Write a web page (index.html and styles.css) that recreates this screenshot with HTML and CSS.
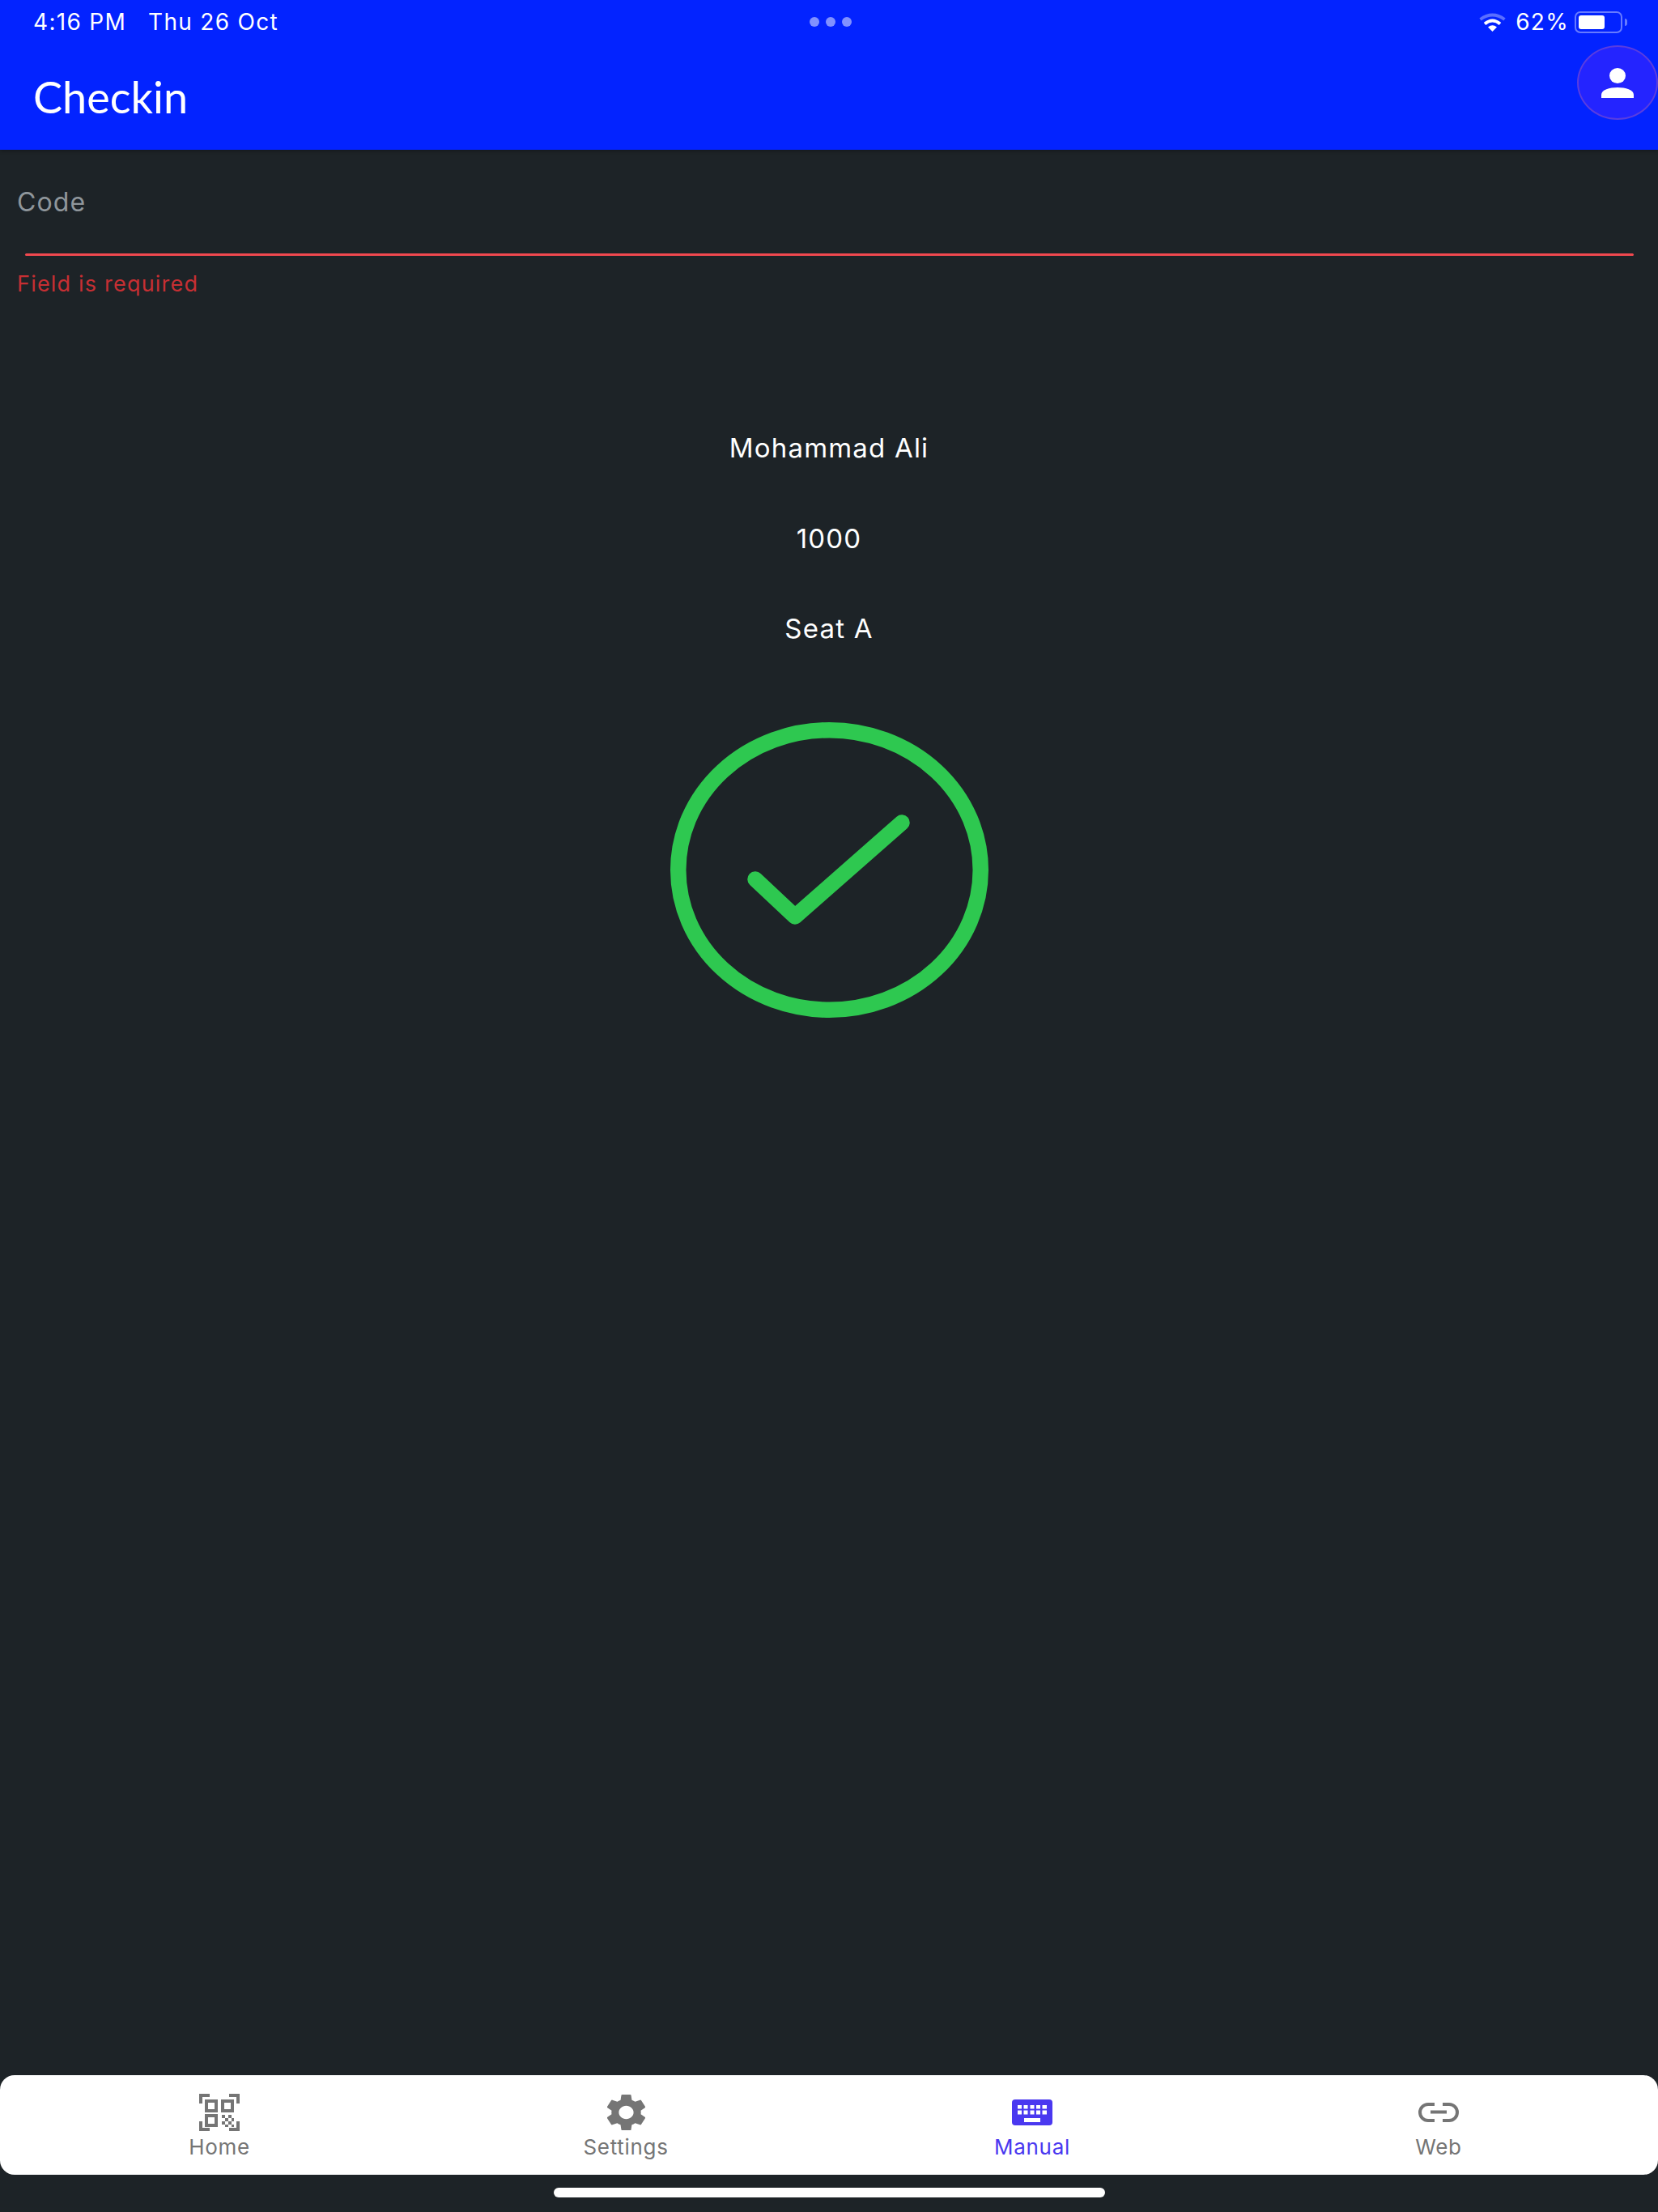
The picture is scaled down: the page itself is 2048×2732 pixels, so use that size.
FILE: index.html
```html
<!DOCTYPE html>
<html lang="en">
<head>
<meta charset="utf-8">
<title>Checkin</title>
<link rel="stylesheet" href="styles.css">
</head>
<body>
<div class="app">
  <header class="appbar">
    <div class="status">
      <div class="status-left"><span>4:16 PM</span><span>Thu 26 Oct</span></div>
      <div class="dots"><i></i><i></i><i></i></div>
      <div class="status-right">
        <svg class="wifi" viewBox="0 0 35 23" width="35" height="23"><path d="M2.5 8 Q17.5 -3 32.5 8" fill="none" stroke="#fff" stroke-opacity=".35" stroke-width="4"/><path d="M8 13.5 Q17.5 5.5 27 13.5" fill="none" stroke="#fff" stroke-width="4"/><path d="M12 17.5 Q17.5 13 23 17.5 L17.5 23 Z" fill="#fff"/></svg>
        <span class="pct">62%</span>
        <div class="battery"><div class="battery-body"><div class="battery-fill"></div></div><div class="battery-nub"></div></div>
      </div>
    </div>
    <div class="toolbar">
      <h1 class="title">Checkin</h1>
      <div class="avatar">
        <svg viewBox="0 0 40 37" width="40" height="37"><ellipse cx="20" cy="9.5" rx="10" ry="9.5" fill="#fff"/><path d="M0 37 V33 C0 27 10 24 20 24 S40 27 40 33 V37 Z" fill="#fff"/></svg>
      </div>
    </div>
  </header>

  <main class="content">
    <section class="field">
      <div class="field-label">Code</div>
      <div class="field-line"></div>
      <div class="field-error">Field is required</div>
    </section>
    <section class="result">
      <div class="result-line">Mohammad Ali</div>
      <div class="result-line">1000</div>
      <div class="result-line">Seat A</div>
      <svg class="check" viewBox="0 0 393 365" width="393" height="365">
        <ellipse cx="196.5" cy="182.5" rx="186.75" ry="172.75" fill="none" stroke="#2ec850" stroke-width="19.5"/>
        <path d="M105 194 L154 240 L286 124" fill="none" stroke="#2ec850" stroke-width="19.5" stroke-linecap="round" stroke-linejoin="round"/>
      </svg>
    </section>
  </main>

  <nav class="tabbar">
    <div class="tab">
      <div class="tab-icon">
        <svg viewBox="0 0 50 46" width="50" height="46" fill="#757575">
          <path d="M0 0H13V4H4V12H0Z"/><path d="M50 0H37V4H46V12H50Z"/><path d="M0 46H13V42H4V34H0Z"/><path d="M50 46H37V42H46V34H50Z"/>
          <path fill-rule="evenodd" d="M7 7H23V23H7ZM11 11V19H19V11Z"/>
          <path fill-rule="evenodd" d="M27 7H43V23H27ZM31 11V19H39V11Z"/>
          <path fill-rule="evenodd" d="M7 25H23V41H7ZM11 29V37H19V29Z"/>
          <path d="M28 26h4v4h-4zM36 26h4v4h-4zM32 30h4v4h-4zM40 30h3v4h-3zM28 34h4v4h-4zM36 34h4v4h-4zM32 38h4v3h-4zM40 38h3v3h-3z"/>
        </svg>
      </div>
      <div class="tab-label">Home</div>
    </div>
    <div class="tab">
      <div class="tab-icon">
        <svg viewBox="2.7 2 18.6 20" width="47" height="46" preserveAspectRatio="none" fill="#757575"><path d="M19.14 12.94c.04-.3.06-.61.06-.94 0-.32-.02-.64-.07-.94l2.03-1.58c.18-.14.23-.41.12-.61l-1.92-3.32c-.12-.22-.37-.29-.59-.22l-2.39.96c-.5-.38-1.03-.7-1.62-.94l-.36-2.54c-.04-.24-.24-.41-.48-.41h-3.84c-.24 0-.43.17-.47.41l-.36 2.54c-.59.24-1.13.57-1.62.94l-2.39-.96c-.22-.08-.47 0-.59.22L2.74 8.87c-.12.21-.08.47.12.61l2.03 1.58c-.05.3-.09.63-.09.94s.02.64.07.94l-2.03 1.58c-.18.14-.23.41-.12.61l1.92 3.32c.12.22.37.29.59.22l2.39-.96c.5.38 1.03.7 1.62.94l.36 2.54c.05.24.24.41.48.41h3.84c.24 0 .44-.17.47-.41l.36-2.54c.59-.24 1.13-.56 1.62-.94l2.39.96c.22.08.47 0 .59-.22l1.92-3.32c.12-.22.07-.47-.12-.61l-2.01-1.58zM12 15.6c-1.98 0-3.6-1.62-3.6-3.6s1.62-3.6 3.6-3.6 3.6 1.62 3.6 3.6-1.62 3.6-3.6 3.6z"/></svg>
      </div>
      <div class="tab-label">Settings</div>
    </div>
    <div class="tab tab-active">
      <div class="tab-icon">
        <svg viewBox="0 0 50 32" width="50" height="32">
          <rect width="50" height="32" rx="4" fill="#4a38f0"/>
          <path fill="#fff" d="M7 7h5v4.500H7zM14.500 7h5v4.500h-5zM22.500 7h5v4.500h-5zM30 7h5v4.500h-5zM37.500 7h5.500v4.500h-5.500zM7 13.500h5v5H7zM14.500 13.500h5v5h-5zM22.500 13.500h5v5h-5zM30 13.500h5v5h-5zM37.500 13.500h5.500v5h-5.500zM15 23h20v5H15z"/>
        </svg>
      </div>
      <div class="tab-label">Manual</div>
    </div>
    <div class="tab">
      <div class="tab-icon">
        <svg viewBox="0 0 50 24" width="50" height="24" fill="none" stroke="#757575" stroke-width="4">
          <path d="M20 2H12A10 10 0 0 0 12 22H20"/>
          <path d="M30 2H38A10 10 0 0 1 38 22H30"/>
          <path d="M15 11.500H35"/>
        </svg>
      </div>
      <div class="tab-label">Web</div>
    </div>
  </nav>
  <div class="home-bar"><div class="home-indicator"></div></div>
</div>
</body>
</html>
```

FILE: styles.css
```css
* { box-sizing: border-box; }
html, body { margin: 0; padding: 0; }
body { background: #1d2327; font-family: "Inter", "Liberation Sans", sans-serif; }

.app { display: flex; flex-direction: column; width: 2048px; height: 2732px; background: #1d2327; }

.appbar { height: 185px; background: #0323ff; color: #fff; box-shadow: 0 2px 4px rgba(0,0,0,.25); }

.status { height: 56px; padding: 0 38px 0 41px; display: grid; grid-template-columns: 1fr auto 1fr; align-items: start; }
.status-left { display: flex; gap: 27px; font-family: "Inter", sans-serif; font-size: 28px; letter-spacing: 1.3px; line-height: 54px; }
.dots { display: flex; gap: 8px; padding-top: 21px; }
.dots i { display: block; width: 12px; height: 12px; border-radius: 50%; background: rgba(255,255,255,.5); }
.status-right { display: flex; justify-content: flex-end; align-items: flex-start; }
.wifi { margin-top: 16px; margin-right: 11px; }
.pct { font-size: 28px; letter-spacing: 1.3px; line-height: 54px; margin-right: 7px; }
.battery { display: flex; align-items: center; margin-top: 14px; }
.battery-body { width: 59px; height: 27px; border: 2px solid rgba(255,255,255,.4); border-radius: 7px; padding: 3px; }
.battery-fill { width: 32px; height: 100%; background: #fff; border-radius: 3px; }
.battery-nub { width: 3px; height: 9px; margin-left: 3px; background: rgba(255,255,255,.4); border-radius: 0 3px 3px 0; }

.toolbar { height: 129px; padding-left: 41px; display: flex; justify-content: space-between; align-items: flex-start; }
.title { margin: 0; font-family: "Lato", sans-serif; font-weight: 400; font-size: 54px; line-height: 128px; }
.avatar { width: 100px; height: 92px; border-radius: 50%; background: #2424ff; border: 2px solid #5a3de0; display: flex; align-items: center; justify-content: center; }

.content { flex: 1; display: flex; flex-direction: column; }
.field { padding: 45px 30px 0 21px; }
.field-label { font-size: 32px; font-weight: 440; line-height: 40px; color: #8f969b; letter-spacing: 1.1px; }
.field-line { height: 3px; margin: 43px 0 0 10px; background: #f0484f; border-radius: 2px; }
.field-error { margin-top: 15px; font-size: 27px; line-height: 40px; color: #c62f33; letter-spacing: 1.2px; }

.result { display: flex; flex-direction: column; align-items: center; padding-top: 162px; }
.result-line { font-size: 33px; font-weight: 440; line-height: 40px; color: #fff; margin-bottom: 71.5px; letter-spacing: 1.2px; }
.check { margin-top: 24px; margin-left: 1px; }

.tabbar { height: 123px; padding: 0 20px; background: #fff; border-radius: 18px; display: grid; grid-template-columns: repeat(4, 1fr); }
.tab { display: flex; flex-direction: column; align-items: center; padding-top: 18px; color: #757575; }
.tab-icon { height: 56px; display: flex; align-items: center; justify-content: center; }
.tab-label { font-family: "Inter", sans-serif; font-size: 26px; letter-spacing: .7px; line-height: 30px; }
.tab-active { color: #4a38f0; }

.home-bar { height: 46px; padding-top: 16px; display: flex; justify-content: center; }
.home-indicator { width: 681px; height: 12px; background: #fff; border-radius: 6px; }
```
